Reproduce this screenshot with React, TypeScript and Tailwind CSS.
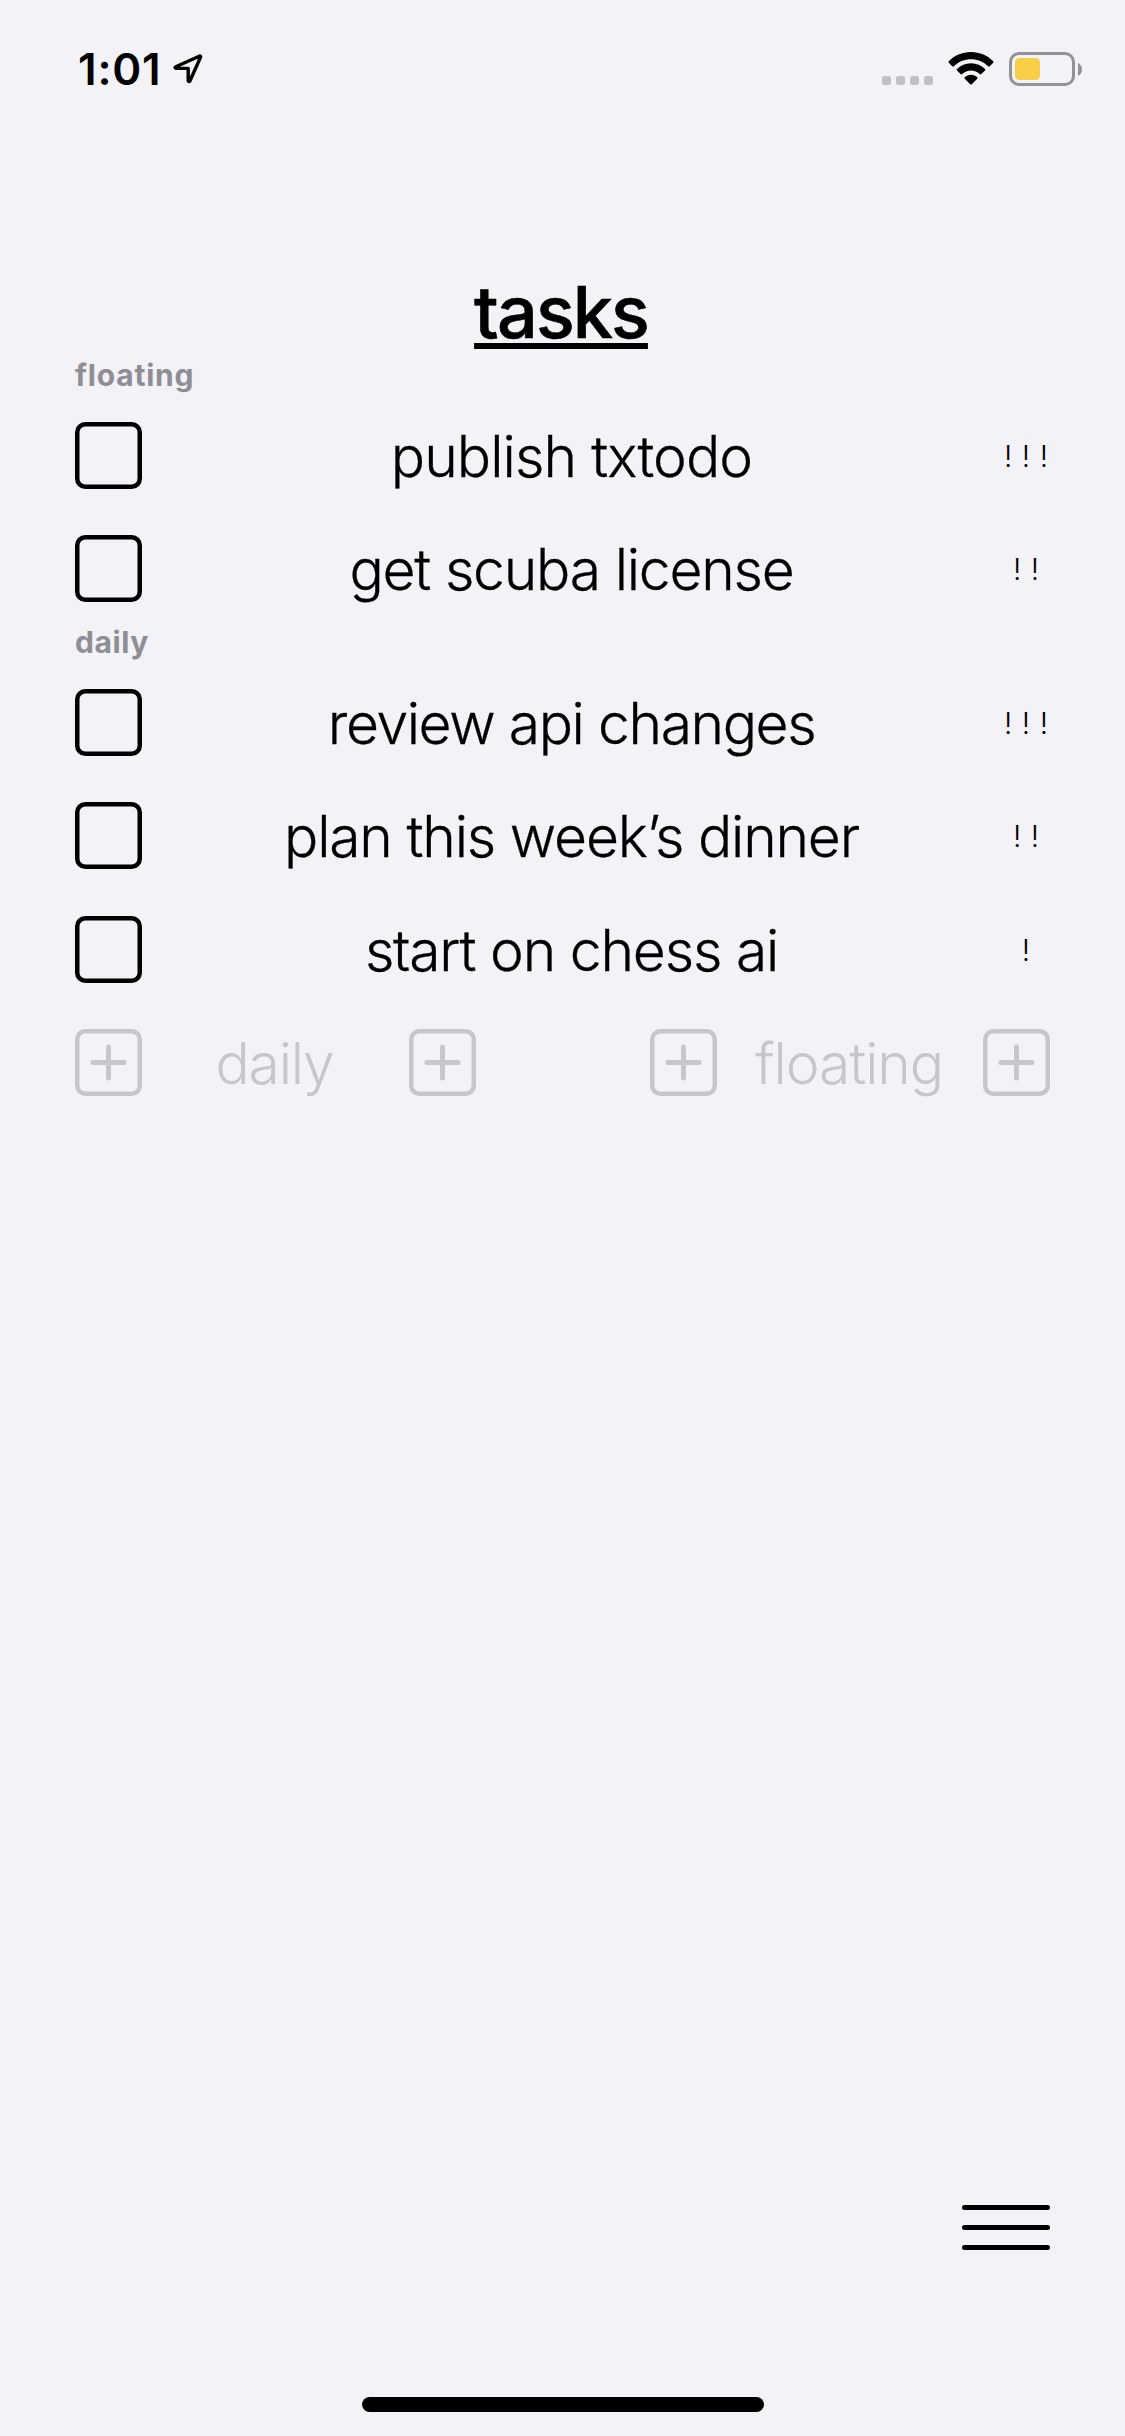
type Task = { title: string; tracking: string; priority: string };

const floatingTasks: Task[] = [
  { title: "publish txtodo", tracking: "tracking-[-0.93px]", priority: "!!!" },
  { title: "get scuba license", tracking: "tracking-[-1.22px]", priority: "!!" },
];

const dailyTasks: Task[] = [
  { title: "review api changes", tracking: "tracking-[-1.42px]", priority: "!!!" },
  { title: "plan this week’s dinner", tracking: "tracking-[-1.2px]", priority: "!!" },
  { title: "start on chess ai", tracking: "tracking-[-1.21px]", priority: "!" },
];

function StatusBar() {
  return (
    <header className="flex h-[120px] shrink-0 items-start justify-between pt-[47px] pr-[43px] pl-[78px]">
      <div className="flex items-start">
        <span className="text-[44px] leading-[44px] font-semibold tracking-[0.8px]">1:01</span>
        <svg
          className="mt-[7px] ml-3"
          width="31"
          height="31"
          viewBox="0 0 31 31"
          fill="none"
          stroke="#000"
          strokeWidth="3.4"
          strokeLinejoin="round"
        >
          <path d="M26.2 2.2Q28 1.600 27.500 3.400L17 26.800Q16 28.500 15.200 26.800V14.400H3.200Q1.200 13.600 2.800 12.800Z" />
        </svg>
      </div>
      <div className="flex items-start pt-[5px]">
        <div className="mt-6 flex gap-[5px]">
          {[0, 1, 2, 3].map((dot) => (
            <i key={dot} className="size-[9px] rounded-[2.5px] bg-[#c1c0c5]" />
          ))}
        </div>
        <svg className="ml-[15px]" width="46" height="33" viewBox="0 0 46 33" fill="#000">
          <path d="M23 0C32 0 39.500 3.500 45.200 9.200Q46 10 45.200 10.800L41.800 14.200Q41 15 40.200 14.200C35.500 9.800 29.500 7.200 23 7.200S10.500 9.800 5.800 14.200Q5 15 4.200 14.200L.8 10.800Q0 10 .8 9.200C6.500 3.500 14 0 23 0Z" />
          <path d="M23 11.200C28.600 11.200 33.200 13.300 37 16.900Q37.800 17.700 37 18.500L33.400 22Q32.600 22.800 31.800 22C29.300 19.800 26.300 18.500 23 18.500S16.700 19.800 14.200 22Q13.400 22.800 12.600 22L9 18.500Q8.200 17.700 9 16.900C12.800 13.300 17.400 11.200 23 11.200Z" />
          <path d="M23 22.800C25.500 22.800 27.500 23.700 29.200 25.200Q30 26 29.200 26.800L23.800 32.200Q23 33 22.200 32.200L16.800 26.800Q16 26 16.800 25.200C18.500 23.700 20.500 22.800 23 22.800Z" />
        </svg>
        <div className="ml-[15px] flex items-center">
          <div className="h-[34px] w-[66px] rounded-[10px] border-[3px] border-[#939297] p-[3px]">
            <div className="h-[22px] w-[25px] rounded-[4.500px] bg-[#f7ce46]" />
          </div>
          <svg className="ml-[3px]" width="4" height="13" viewBox="0 0 4 13">
            <path d="M0 0C2.500 1 4 3.500 4 6.500S2.500 12 0 13Z" fill="#939297" />
          </svg>
        </div>
      </div>
    </header>
  );
}

function BoxIcon({ plus = false }: { plus?: boolean }) {
  return (
    <svg className="shrink-0" width="67" height="67" viewBox="0 0 67 67" fill="none" stroke="currentColor">
      <rect x="2.25" y="2.25" width="62.500" height="62.500" rx="8" strokeWidth="4.500" />
      {plus && <path d="M18 33.500H49M33.500 18V49" strokeWidth="5" strokeLinecap="round" />}
    </svg>
  );
}

function TaskRow({ title, tracking, priority }: Task) {
  return (
    <li className="flex h-[67px] items-center">
      <BoxIcon />
      <span
        className={`flex-1 pt-[3px] pr-[3px] text-center text-[57px] leading-[64px] font-light whitespace-nowrap [-webkit-text-stroke:0.3px_currentColor] ${tracking}`}
      >
        {title}
      </span>
      <span className="flex w-[46px] justify-center pr-0.5 text-[29.500px] leading-[30px] font-light tracking-[9.600px]">
        <span className="-mr-[9.600px]">{priority}</span>
      </span>
    </li>
  );
}

function SectionLabel({ text, tracking }: { text: string; tracking: string }) {
  return <h2 className={`text-[30px] leading-[30px] font-bold text-[#8f8e94] ${tracking}`}>{text}</h2>;
}

export default function App() {
  return (
    <div className="flex h-[2436px] w-[1125px] flex-col bg-[#f2f2f7] font-['Inter',sans-serif] text-black">
      <StatusBar />
      <main className="flex flex-1 flex-col px-[75px] pt-[156px]">
        <h1 className="pr-[3px] text-center text-[72px] leading-[72px] font-medium tracking-[-1.94px] underline decoration-[6px] underline-offset-[5px] [-webkit-text-stroke:0.6px_#000] [text-decoration-skip-ink:none]">
          tasks
        </h1>

        <section className="mt-3">
          <SectionLabel text="floating" tracking="tracking-[0.8px]" />
          <ul className="mt-8 flex flex-col gap-[46px]">
            {floatingTasks.map((task) => (
              <TaskRow key={task.title} {...task} />
            ))}
          </ul>
        </section>

        <section className="mt-[25px]">
          <SectionLabel text="daily" tracking="tracking-[0.6px]" />
          <ul className="mt-8 flex flex-col gap-[46px] [&>li:last-child]:mt-px">
            {dailyTasks.map((task) => (
              <TaskRow key={task.title} {...task} />
            ))}
          </ul>
        </section>

        <div className="mt-[46px] flex justify-between text-[57px] leading-[64px] font-light text-[#c7c6cb]">
          <div className="flex w-[401px] items-center justify-between">
            <BoxIcon plus />
            <span className="pt-[3px] pr-0.5 tracking-[-1.23px]">daily</span>
            <BoxIcon plus />
          </div>
          <div className="flex w-[400px] items-center justify-between">
            <BoxIcon plus />
            <span className="pt-[3px] pr-0.5 tracking-[-1.07px]">floating</span>
            <BoxIcon plus />
          </div>
        </div>

        <button type="button" aria-label="Menu" className="mt-auto mb-[147px] flex w-[88px] flex-col gap-[15px] self-end">
          <span className="h-[5px] rounded-full bg-black" />
          <span className="h-[5px] rounded-full bg-black" />
          <span className="h-[5px] rounded-full bg-black" />
        </button>
      </main>
      <footer className="mb-6 flex justify-center pl-px">
        <span className="h-[15px] w-[402px] rounded-full bg-black" />
      </footer>
    </div>
  );
}
